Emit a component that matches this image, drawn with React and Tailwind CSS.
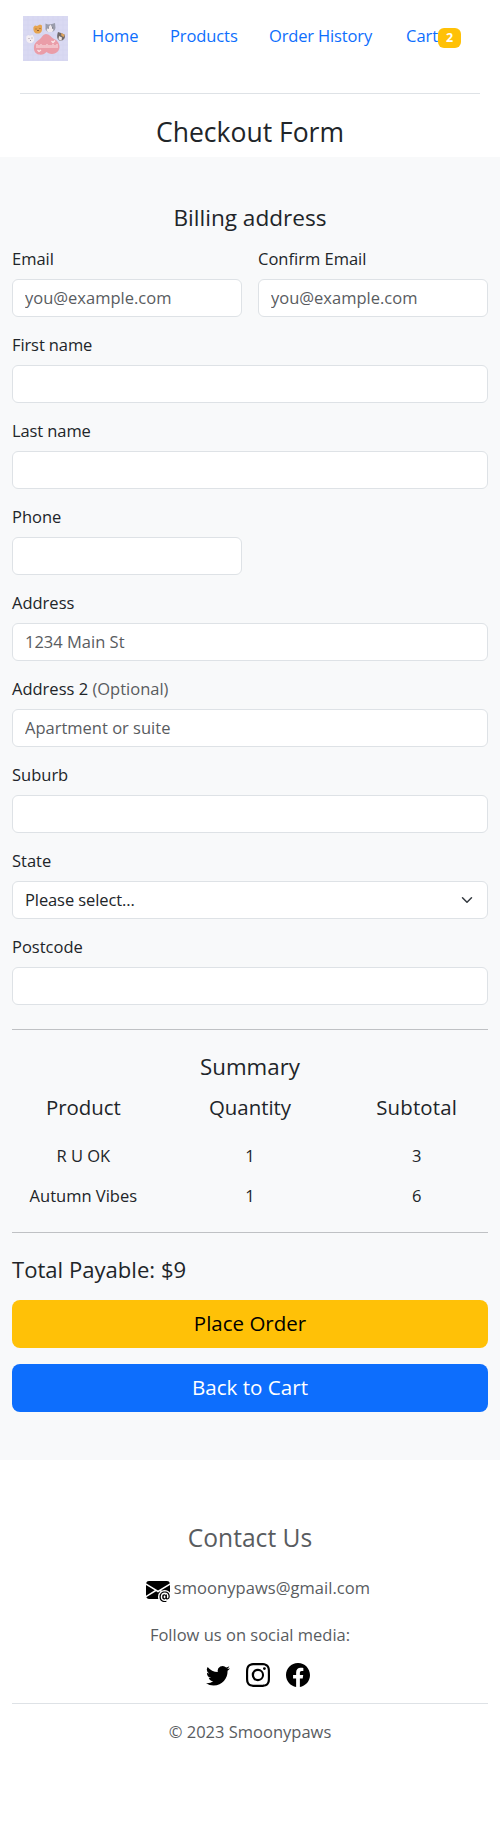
import React from 'react';
import { BsEnvelopeAtFill, BsTwitter, BsInstagram, BsFacebook } from 'react-icons/bs';

const inputClass =
  'block h-[38px] w-full rounded-md border border-[#dee2e6] bg-white px-3 pb-[2px] text-[16.5px] leading-6 text-[#212529] placeholder:text-[#595c5f] placeholder:opacity-100';

function Field({ label, note, placeholder, children, className = '' }) {
  return (
    <label className={`block ${className}`}>
      <span className="mb-2 block h-6 leading-6">
        {label}
        {note && <span className="text-[#595c5f]"> {note}</span>}
      </span>
      {children || <input className={inputClass} placeholder={placeholder} />}
    </label>
  );
}

function Logo() {
  return (
    <svg width="45" height="45" viewBox="0 0 45 45" className="block shrink-0">
      <rect width="45" height="45" fill="#d9d9f2" />
      <path
        d="M5 0V45M10 0V45M15 0V45M20 0V45M25 0V45M30 0V45M35 0V45M40 0V45M0 4H45M0 9H45M0 14H45M0 19H45M0 24H45M0 29H45M0 34H45M0 39H45M0 44H45"
        stroke="#d0d1ee"
        strokeWidth=".5"
      />
      <path
        d="M23 18C26 18 28 21 31 23C34 24 36.500 27 36.500 31C36.500 35 33 38 29 38C26 38 24.500 36.500 23.500 36C22 38 19 39 16 38.500C12 38 10.500 34 11 30.500C11.500 26.500 14.500 25 17 23C19 21 20.500 18 23 18Z"
        fill="#ea9da8"
      />
      <path d="M3.500 20L5.500 19L7 19.800L9.500 18.800L11 21.500C12 25 10 27 7 27C4 27 2.500 24 3.500 20Z" fill="#f3eef3" />
      <path d="M5.500 22.500h1M8.500 22h1M7 24.500h1" stroke="#8e7f8d" strokeWidth=".8" />
      <path d="M10.500 11L12 9.500L14 10L17 8.500L19 9.500L19 14C18.500 17 16 18 13.500 17.500C11 17 10 14 10.500 11Z" fill="#e6a451" />
      <path d="M12.500 13h1M16.500 12.500h1M14 14.500h2" stroke="#855831" strokeWidth=".9" />
      <path d="M22.500 7.500L25 8.500L29 8L32 7L32.500 12C32 15 29.500 16 27 16C24 16 22 14 22.500 12Z" fill="#9a9cab" />
      <path d="M27.500 8.500L30.500 14L29 16H25L23.500 14Z" fill="#f0e9ed" />
      <path d="M25 12h1M29 12h1" stroke="#54505e" strokeWidth=".9" />
      <path d="M35 16L38 17L41.500 18.500L42 21C41 24 39 25 36.500 24.500C34 23.500 33.500 20 35 16Z" fill="#716a6c" />
      <path d="M38 17L41.500 18.500L41 21L38.500 20Z" fill="#e0a55f" />
      <path d="M36 20L39 21.500L38.500 24.500L35.500 23.500Z" fill="#f0e6e3" />
      <path
        d="M14 28v4M16 29v3M18 28v4M20 29v3M22 29v3M24 28v4M26 29v3M28 29v3M30 28v4M32 29v3M34 28v4"
        stroke="#f8dfe2"
        strokeWidth="1.100"
      />
      <path d="M28.500 25l1.500 1.500l2-2M14.500 34l1.500 1.500l2-1.500" stroke="#fae6e8" strokeWidth="1.300" fill="none" />
    </svg>
  );
}

const rows = [
  ['R U OK', '1', '3'],
  ['Autumn Vibes', '1', '6'],
];

export default function App() {
  return (
    <div className="min-h-[1824px] bg-white font-['Open_Sans','Noto_Sans',sans-serif] text-[16.5px] leading-6 text-[#212529]">
      <header className="h-[157px] px-5">
        <nav className="flex h-[94px] items-start border-b border-[#dee2e6] pt-4 pl-[3px] text-[#0d6efd]">
          <Logo />
          <a href="#" className="mt-2 ml-6 w-[78px]">Home</a>
          <a href="#" className="mt-2 w-[99px] tracking-[-0.1px]">Products</a>
          <a href="#" className="mt-2 w-[137px] whitespace-nowrap tracking-[-0.15px]">Order History</a>
          <a href="#" className="mt-2 w-8">Cart</a>
          <span className="mt-3 h-5 w-[23px] rounded-md bg-[#ffc107] text-center text-[12.5px] leading-[19px] font-bold text-white">2</span>
        </nav>
        <h1 className="mt-[22px] text-center text-[26.5px] leading-8">Checkout Form</h1>
      </header>

      <main className="h-[1303px] bg-[#f8f9fa] px-3 pt-12">
        <h2 className="h-[42px] text-center text-[22.6px] leading-[26px]">Billing address</h2>
        <form className="flex flex-col gap-4">
          <div className="grid grid-cols-2 gap-4">
            <Field label="Email" placeholder="you@example.com" />
            <Field label="Confirm Email" placeholder="you@example.com" />
          </div>
          <Field label="First name" className="tracking-[-0.1px]" />
          <Field label="Last name" className="tracking-[-0.1px]" />
          <Field label="Phone" className="w-[230px]" />
          <Field label="Address" placeholder="1234 Main St" />
          <Field label="Address 2" note="(Optional)" placeholder="Apartment or suite" />
          <Field label="Suburb" />
          <Field label="State">
            <span className="flex h-[38px] items-center justify-between rounded-md border border-[#dee2e6] bg-white px-3 tracking-[-0.1px]">
              Please select...
              <svg width="16" height="12" viewBox="0 0 16 16" fill="none" stroke="#343a40" strokeWidth="2" strokeLinecap="round" strokeLinejoin="round">
                <path d="m2 5 6 6 6-6" />
              </svg>
            </span>
          </Field>
          <Field label="Postcode" />
        </form>

        <hr className="mt-6 border-[#bfc1c4]" />
        <h2 className="mt-6 text-center text-[22.3px] leading-[26px]">Summary</h2>
        <div className="-mx-3 mt-2 grid h-12 grid-cols-3 text-center text-[20.4px] leading-[38px]">
          <span>Product</span>
          <span>Quantity</span>
          <span className="tracking-[0.2px]">Subtotal</span>
        </div>
        {rows.map(([name, quantity, subtotal]) => (
          <div key={name} className="-mx-3 grid h-10 grid-cols-3 text-center leading-10">
            <span>{name}</span>
            <span>{quantity}</span>
            <span>{subtotal}</span>
          </div>
        ))}
        <hr className="mt-4 border-[#bfc1c4]" />
        <p className="mt-[23px] text-[22.1px] leading-[26px]">Total Payable: $9</p>
        <button className="mt-[18px] block h-12 w-full rounded-lg bg-[#ffc107] pb-[3px] text-[20.5px] text-black">Place Order</button>
        <button className="mt-4 block h-12 w-full rounded-lg bg-[#0d6efd] pb-[3px] text-[20.6px] text-white">Back to Cart</button>
      </main>

      <footer className="px-3 pt-16 text-center text-[#595c5f]">
        <h2 className="text-[24.6px] leading-[28px]">Contact Us</h2>
        <p className="mt-[22px] flex items-center justify-center pl-4">
          <BsEnvelopeAtFill size={24} className="mt-1 mr-1 text-black" />
          <span className="tracking-[0.05px]">smoonypaws@gmail.com</span>
        </p>
        <p className="mt-[21px]">Follow us on social media:</p>
        <div className="mt-4 flex justify-center gap-4 pl-4 text-black">
          <BsTwitter size={24} />
          <BsInstagram size={24} />
          <BsFacebook size={24} />
        </div>
        <hr className="mt-4 border-[#dee2e6]" />
        <p className="mt-4">© 2023 Smoonypaws</p>
      </footer>
    </div>
  );
}
